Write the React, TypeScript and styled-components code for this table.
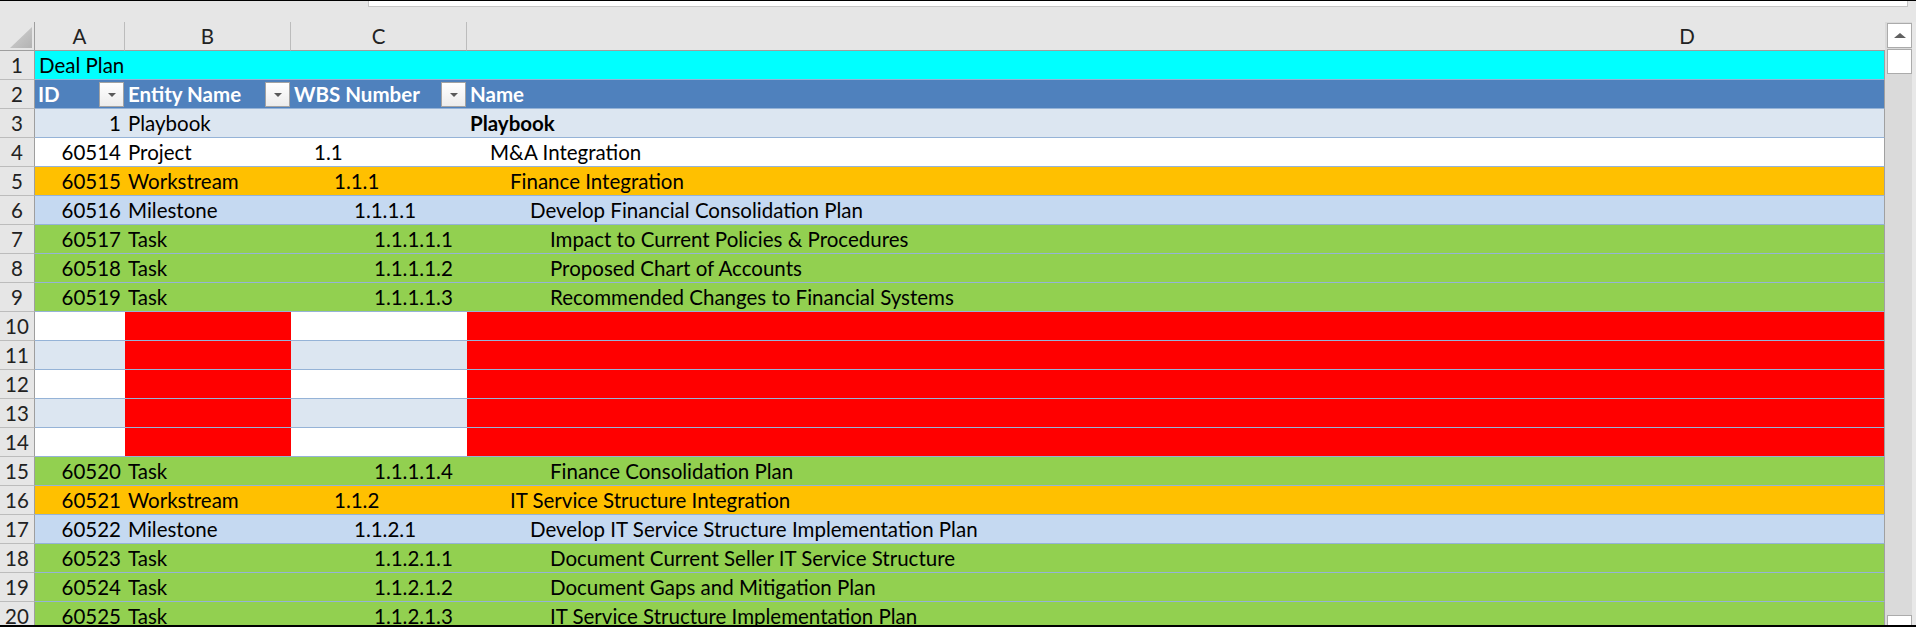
import React from "react";
import styled, { createGlobalStyle } from "styled-components";

const FONT = `Lato, "Liberation Sans", sans-serif`;

const GlobalStyle = createGlobalStyle`
  html, body { margin: 0; padding: 0; background: #e6e6e6; overflow: hidden; }
  #root { width: 1916px; height: 627px; }
`;

const FILLS = {
  cyan: "#00ffff",
  header: "#4f81bd",
  band: "#dce6f1",
  white: "#ffffff",
  orange: "#ffc000",
  milestone: "#c5d9f1",
  green: "#92d050",
  red: "#ff0000",
} as const;
type Fill = keyof typeof FILLS;

const COLS = "35px 90px 166px 176px 1418px";

const Frame = styled.div`
  width: 1916px;
  height: 627px;
  box-sizing: border-box;
  border-top: 1px solid #000;
  border-bottom: 2px solid #000;
  background: #e6e6e6;
  overflow: hidden;
  display: flex;
  flex-direction: column;
  font-family: ${FONT};
  font-size: 20.5px;
  color: #000;
`;

const TopStrip = styled.div`
  flex: none;
  height: 21px;
  display: flex;
  padding: 0 8px 0 368px;
`;

const FormulaBox = styled.div`
  flex: 1;
  height: 6px;
  box-sizing: border-box;
  background: #fff;
  border: 1px solid #c6c6c6;
  border-top: none;
`;

const Body = styled.div`
  flex: none;
  height: 618px;
  display: flex;
`;

const Sheet = styled.div`
  width: 1885px;
  flex: none;
  display: flex;
  flex-direction: column;
`;

const GridRow = styled.div`
  display: grid;
  grid-template-columns: ${COLS};
  height: 29px;
  flex: none;
`;

const Corner = styled.div`
  box-sizing: border-box;
  border-right: 1px solid #9e9e9e;
  border-bottom: 1px solid #9e9e9e;
  display: flex;
  align-items: flex-end;
  justify-content: flex-end;
  padding: 0 2px 2px 0;
`;

const ColLetter = styled.div<{ $sep?: boolean }>`
  box-sizing: border-box;
  border-bottom: 1px solid #9e9e9e;
  border-right: ${(p) => (p.$sep ? "1px solid #bcbcbc" : "none")};
  text-align: center;
  line-height: 28px;
  color: #222;
  overflow: hidden;
`;

const WideLetter = styled.div`
  width: 2440px;
  text-align: center;
`;

const RowNum = styled.div`
  box-sizing: border-box;
  background: #e6e6e6;
  border-right: 1px solid #9e9e9e;
  border-bottom: 1px solid #bcbcbc;
  text-align: center;
  line-height: 28px;
  color: #222;
`;

const Cell = styled.div<{
  $fill: Fill;
  $right?: boolean;
  $indent?: number;
  $bold?: boolean;
  $last?: boolean;
}>`
  box-sizing: border-box;
  background: ${(p) => FILLS[p.$fill]};
  border-bottom: 1px solid #95b3d7;
  border-right: ${(p) => (p.$last ? "1px solid #a0a0a0" : "none")};
  padding: ${(p) =>
    p.$right ? "0 4px 0 0" : `0 0 0 ${3 + (p.$indent ?? 0) * 20}px`};
  text-align: ${(p) => (p.$right ? "right" : "left")};
  font-weight: ${(p) => (p.$bold ? 700 : 400)};
  line-height: 28px;
  white-space: nowrap;
`;

const TitleCell = styled.div`
  grid-column: 2 / span 4;
  box-sizing: border-box;
  background: ${FILLS.cyan};
  border-bottom: 1px solid #95b3d7;
  border-right: 1px solid #a0a0a0;
  padding-left: 4px;
  line-height: 28px;
`;

const HeadCell = styled.div<{ $last?: boolean }>`
  box-sizing: border-box;
  background: ${FILLS.header};
  border-bottom: 1px solid #95b3d7;
  border-right: ${(p) => (p.$last ? "1px solid #a0a0a0" : "none")};
  display: flex;
  align-items: flex-start;
  padding-left: 3px;
  color: #fff;
  font-weight: 700;
  line-height: 28px;
  white-space: nowrap;
`;

const FilterButton = styled.div`
  box-sizing: border-box;
  width: 25px;
  height: 25px;
  margin: 2px 1px 0 auto;
  border: 1px solid #a3a3a3;
  background: linear-gradient(#ffffff, #ececec);
  display: flex;
  align-items: center;
  justify-content: center;
`;

const ScrollBar = styled.div`
  width: 31px;
  flex: none;
  box-sizing: border-box;
  background: #dadada;
  border-right: 4px solid #e8e8e8;
  display: flex;
  flex-direction: column;
  gap: 1px;
  padding: 1px 0 0 2px;
`;

const ScrollButton = styled.div<{ $push?: boolean }>`
  box-sizing: border-box;
  width: 25px;
  height: 25px;
  flex: none;
  background: #fff;
  border: 1px solid #ababab;
  margin-top: ${(p) => (p.$push ? "auto" : "0")};
  display: flex;
  align-items: center;
  justify-content: center;
`;

const Arrow = ({ dir, w, h, color }: { dir: "up" | "down"; w: number; h: number; color: string }) => (
  <svg width={w} height={h} viewBox={`0 0 ${w} ${h}`}>
    {dir === "up" ? (
      <polygon points={`0,${h} ${w / 2},0 ${w},${h}`} fill={color} />
    ) : (
      <polygon points={`0,0 ${w},0 ${w / 2},${h}`} fill={color} />
    )}
  </svg>
);

const CornerTriangle = () => (
  <svg width="22" height="21" viewBox="0 0 22 21">
    <defs>
      <linearGradient id="ct" x1="0" y1="0" x2="1" y2="1">
        <stop offset="0" stopColor="#d2d2d2" />
        <stop offset="1" stopColor="#b3b3b3" />
      </linearGradient>
    </defs>
    <polygon points="22,0 22,21 0,21" fill="url(#ct)" />
  </svg>
);

type DataRow = {
  id?: string;
  entity?: string;
  wbs?: string;
  name?: string;
  fill: Fill;
  bold?: boolean;
  gap?: boolean;
};

const ROWS: DataRow[] = [
  { id: "1", entity: "Playbook", wbs: "", name: "Playbook", fill: "band", bold: true },
  { id: "60514", entity: "Project", wbs: "1.1", name: "M&A Integration", fill: "white" },
  { id: "60515", entity: "Workstream", wbs: "1.1.1", name: "Finance Integration", fill: "orange" },
  { id: "60516", entity: "Milestone", wbs: "1.1.1.1", name: "Develop Financial Consolidation Plan", fill: "milestone" },
  { id: "60517", entity: "Task", wbs: "1.1.1.1.1", name: "Impact to Current Policies & Procedures", fill: "green" },
  { id: "60518", entity: "Task", wbs: "1.1.1.1.2", name: "Proposed Chart of Accounts", fill: "green" },
  { id: "60519", entity: "Task", wbs: "1.1.1.1.3", name: "Recommended Changes to Financial Systems", fill: "green" },
  { fill: "white", gap: true },
  { fill: "band", gap: true },
  { fill: "white", gap: true },
  { fill: "band", gap: true },
  { fill: "white", gap: true },
  { id: "60520", entity: "Task", wbs: "1.1.1.1.4", name: "Finance Consolidation Plan", fill: "green" },
  { id: "60521", entity: "Workstream", wbs: "1.1.2", name: "IT Service Structure Integration", fill: "orange" },
  { id: "60522", entity: "Milestone", wbs: "1.1.2.1", name: "Develop IT Service Structure Implementation Plan", fill: "milestone" },
  { id: "60523", entity: "Task", wbs: "1.1.2.1.1", name: "Document Current Seller IT Service Structure", fill: "green" },
  { id: "60524", entity: "Task", wbs: "1.1.2.1.2", name: "Document Gaps and Mitigation Plan", fill: "green" },
  { id: "60525", entity: "Task", wbs: "1.1.2.1.3", name: "IT Service Structure Implementation Plan", fill: "green" },
];

const levelOf = (wbs?: string) => (wbs ? wbs.split(".").length - 1 : 0);

const HEADERS = ["ID", "Entity Name", "WBS Number", "Name"];

export default function App() {
  return (
    <>
      <GlobalStyle />
      <Frame>
        <TopStrip>
          <FormulaBox />
        </TopStrip>
        <Body>
          <Sheet>
            <GridRow>
              <Corner>
                <CornerTriangle />
              </Corner>
              <ColLetter $sep>A</ColLetter>
              <ColLetter $sep>B</ColLetter>
              <ColLetter $sep>C</ColLetter>
              <ColLetter>
                <WideLetter>D</WideLetter>
              </ColLetter>
            </GridRow>

            <GridRow>
              <RowNum>1</RowNum>
              <TitleCell>Deal Plan</TitleCell>
            </GridRow>

            <GridRow>
              <RowNum>2</RowNum>
              {HEADERS.map((h, i) => (
                <HeadCell key={h} $last={i === 3}>
                  {h}
                  {i < 3 && (
                    <FilterButton>
                      <Arrow dir="down" w={8} h={4} color="#5a5a5a" />
                    </FilterButton>
                  )}
                </HeadCell>
              ))}
            </GridRow>

            {ROWS.map((r, i) => {
              const lvl = levelOf(r.wbs);
              return (
                <GridRow key={i}>
                  <RowNum>{i + 3}</RowNum>
                  <Cell $fill={r.fill} $right>
                    {r.id}
                  </Cell>
                  <Cell $fill={r.gap ? "red" : r.fill}>{r.entity}</Cell>
                  <Cell $fill={r.fill} $indent={lvl}>
                    {r.wbs}
                  </Cell>
                  <Cell $fill={r.gap ? "red" : r.fill} $indent={lvl} $bold={r.bold} $last>
                    {r.name}
                  </Cell>
                </GridRow>
              );
            })}
          </Sheet>
          <ScrollBar>
            <ScrollButton>
              <Arrow dir="up" w={12} h={5} color="#606060" />
            </ScrollButton>
            <ScrollButton />
            <ScrollButton $push>
              <Arrow dir="down" w={12} h={5} color="#606060" />
            </ScrollButton>
          </ScrollBar>
        </Body>
      </Frame>
    </>
  );
}
